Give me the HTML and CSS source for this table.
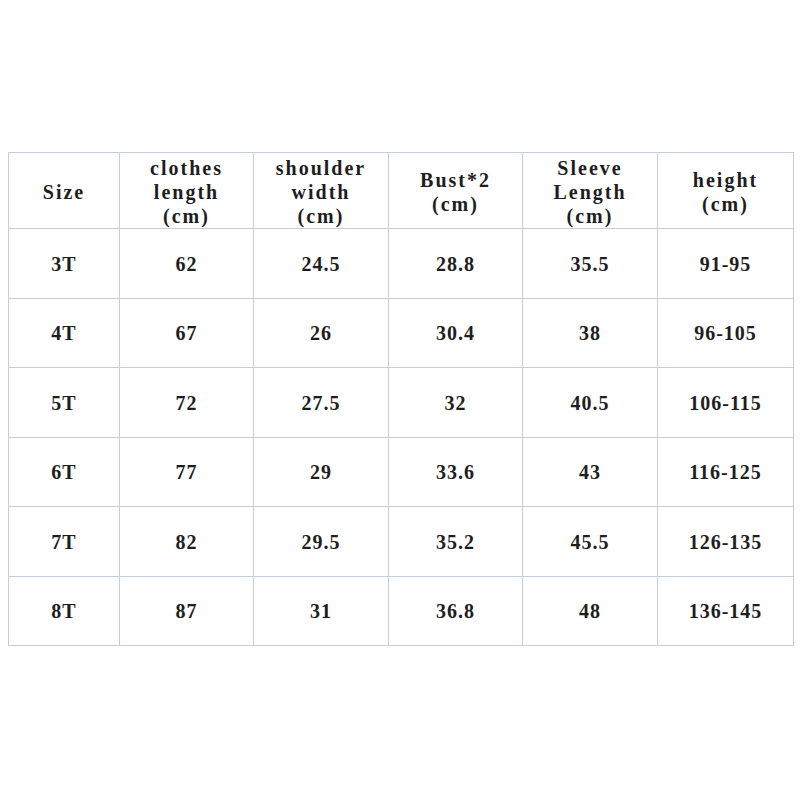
FILE: index.html
```html
<!DOCTYPE html>
<html>
<head>
<meta charset="utf-8">
<link rel="stylesheet" href="styles.css">
</head>
<body>
<div class="page">
<table class="sizes">
<colgroup>
<col class="c1"><col class="c2"><col class="c3"><col class="c4"><col class="c5"><col class="c6">
</colgroup>
<tr class="head">
<td>Size</td>
<td>clothes<br>length<br>(cm)</td>
<td>shoulder<br>width<br>(cm)</td>
<td>Bust*2<br>(cm)</td>
<td>Sleeve<br>Length<br>(cm)</td>
<td>height<br>(cm)</td>
</tr>
<tr><td>3T</td><td>62</td><td>24.5</td><td>28.8</td><td>35.5</td><td>91-95</td></tr>
<tr><td>4T</td><td>67</td><td>26</td><td>30.4</td><td>38</td><td>96-105</td></tr>
<tr><td>5T</td><td>72</td><td>27.5</td><td>32</td><td>40.5</td><td>106-115</td></tr>
<tr><td>6T</td><td>77</td><td>29</td><td>33.6</td><td>43</td><td>116-125</td></tr>
<tr><td>7T</td><td>82</td><td>29.5</td><td>35.2</td><td>45.5</td><td>126-135</td></tr>
<tr><td>8T</td><td>87</td><td>31</td><td>36.8</td><td>48</td><td>136-145</td></tr>
</table>
</div>
</body>
</html>
```

FILE: styles.css
```css
html, body {
  margin: 0;
  padding: 0;
  background: #ffffff;
}
.page {
  padding: 152px 0 0 8px;
}
.sizes {
  border-collapse: collapse;
  table-layout: fixed;
  width: 786px;
  font-family: "Liberation Serif", "DejaVu Serif", serif;
  font-weight: bold;
  font-size: 20px;
  letter-spacing: 1px;
  color: #1e1e1e;
}
.c1 { width: 111px; }
.c2 { width: 134px; }
.c3 { width: 135px; }
.c4 { width: 134px; }
.c5 { width: 135px; }
.c6 { width: 136px; }
.sizes td {
  border: 1px solid #c9ccd9;
  text-align: center;
  vertical-align: middle;
  padding: 2px 0 0 0;
  height: 66.5px;
  line-height: 25px;
}
.sizes tr.head td {
  padding: 3px 0 0 0;
  height: 72px;
  line-height: 24px;
  letter-spacing: 2px;
}
```
